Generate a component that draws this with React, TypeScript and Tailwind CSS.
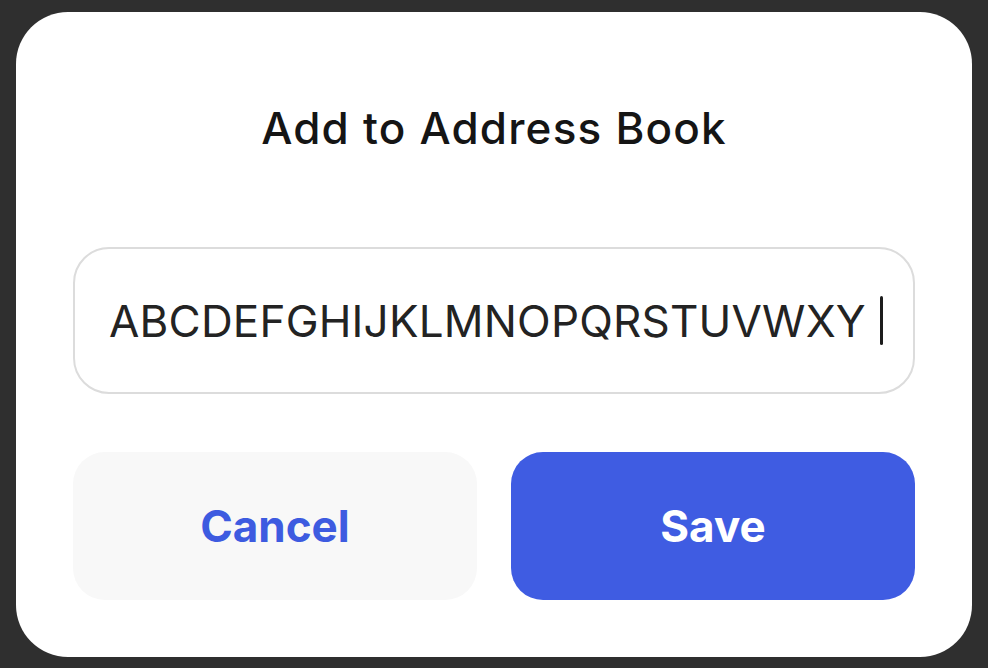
import React from "react";

export default function App() {
  return (
    <div
      className="w-[988px] h-[668px] bg-[#2f2f2f] pt-[12px] px-[16px] pb-[11px]"
      style={{ fontFamily: "Inter, 'Noto Sans', sans-serif" }}
    >
      <div className="w-full h-full bg-white rounded-[52px] flex flex-col px-[57px] pt-[88px]">
        <h1 className="text-center text-[44px] leading-[56px] font-medium text-[#151515] tracking-[1.2px]">
          Add to Address Book
        </h1>
        <div className="mt-[91px] h-[147px] rounded-[36px] border-2 border-[#dcdcdc] flex items-center pl-[34px]">
          <span className="text-[44px] text-[#232323] tracking-[0.2px] leading-none">
            ABCDEFGHIJKLMNOPQRSTUVWXY
          </span>
          <span className="ml-[14px] w-[3px] h-[49px] bg-[#1c1c1c] rounded-sm" />
        </div>
        <div className="mt-[58px] flex gap-[34px]">
          <button className="flex-1 h-[148px] rounded-[32px] bg-[#f8f8f8] text-[#3d5be0] text-[44px] font-bold">
            Cancel
          </button>
          <button className="flex-1 h-[148px] rounded-[32px] bg-[#3f5ce2] text-white text-[44px] font-bold">
            Save
          </button>
        </div>
      </div>
    </div>
  );
}
